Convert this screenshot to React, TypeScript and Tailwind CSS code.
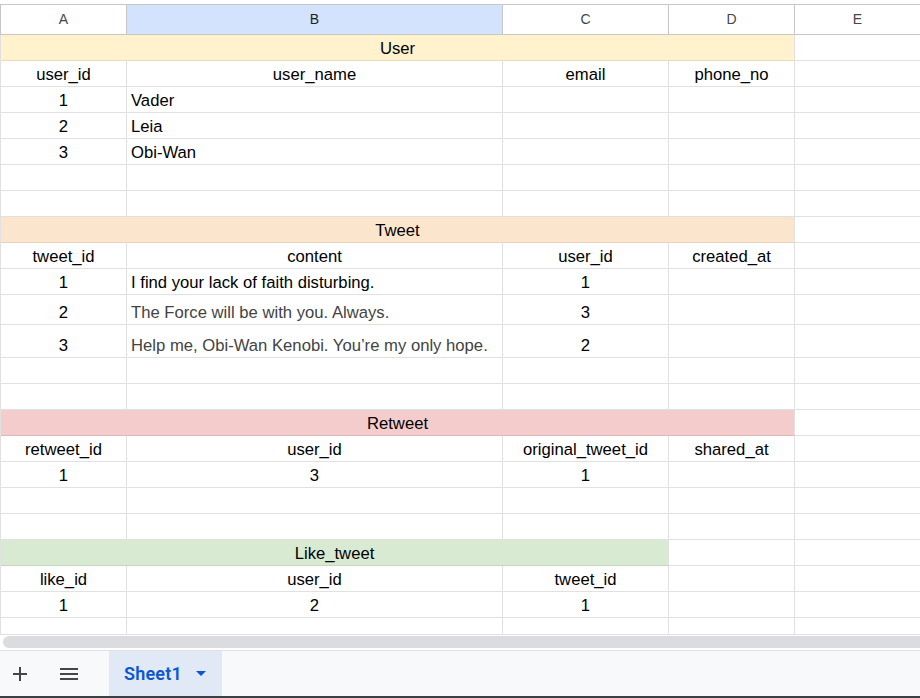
import type { ReactNode } from "react";

type Cell = { t?: string; left?: boolean; dim?: boolean };
type Band = { label: string; span: 3 | 4; bg: string; line: string };
type Row = { h?: string; band?: Band; cells?: Cell[] };

const COLS = ["w-[126px]", "w-[376px]", "w-[166px]", "w-[126px]"];
const FONT = "font-['Liberation_Sans',Arial,sans-serif]";

const c = (t: string): Cell => ({ t });
const l = (t: string, dim = false): Cell => ({ t, left: true, dim });

const ROWS: Row[] = [
  { band: { label: "User", span: 4, bg: "bg-[#fff2cc]", line: "border-b-[#eadcb5]" } },
  { cells: [c("user_id"), c("user_name"), c("email"), c("phone_no")] },
  { cells: [c("1"), l("Vader")] },
  { cells: [c("2"), l("Leia")] },
  { cells: [c("3"), l("Obi-Wan")] },
  {},
  {},
  { band: { label: "Tweet", span: 4, bg: "bg-[#fce5cd]", line: "border-b-[#e9d2ba]" } },
  { cells: [c("tweet_id"), c("content"), c("user_id"), c("created_at")] },
  { cells: [c("1"), l("I find your lack of faith disturbing."), c("1")] },
  { h: "h-[30px]", cells: [c("2"), l("The Force will be with you. Always.", true), c("3")] },
  { h: "h-[33px]", cells: [c("3"), l("Help me, Obi-Wan Kenobi. You’re my only hope.", true), c("2")] },
  {},
  {},
  { band: { label: "Retweet", span: 4, bg: "bg-[#f4cccc]", line: "border-b-[#e0b9b9]" } },
  { cells: [c("retweet_id"), c("user_id"), c("original_tweet_id"), c("shared_at")] },
  { cells: [c("1"), c("3"), c("1")] },
  {},
  {},
  { band: { label: "Like_tweet", span: 3, bg: "bg-[#d9ead3]", line: "border-b-[#c5d7bf]" } },
  { cells: [c("like_id"), c("user_id"), c("tweet_id")] },
  { cells: [c("1"), c("2"), c("1")] },
  {},
  {},
];

function GridCell({ w, cell, children }: { w: string; cell?: Cell; children?: ReactNode }) {
  const align = cell?.left ? "justify-start pl-[4px]" : "justify-center";
  const tone = cell?.dim ? "text-[#434343]" : "text-black";
  return (
    <div className={`${w} shrink-0 flex items-end pb-[2px] border-r border-b border-[#e1e1e1] whitespace-nowrap ${align} ${tone}`}>
      {children ?? cell?.t}
    </div>
  );
}

function SheetRow({ row }: { row: Row }) {
  const h = row.h ?? "h-[26px]";
  if (row.band) {
    const b = row.band;
    return (
      <div className={`flex ${h} border-l border-[#e1e1e1]`}>
        <div className={`${b.span === 4 ? "w-[794px]" : "w-[668px]"} shrink-0 flex items-end justify-center pb-[2px] border-r border-b border-[#e1e1e1] ${b.line} ${b.bg} text-black`}>
          {b.label}
        </div>
        {b.span === 3 && <GridCell w={COLS[3]} />}
        <div className="flex-1 border-b border-[#e1e1e1]" />
      </div>
    );
  }
  return (
    <div className={`flex ${h} border-l border-[#e1e1e1]`}>
      {COLS.map((w, i) => (
        <GridCell key={i} w={w} cell={row.cells?.[i]} />
      ))}
      <div className="flex-1 border-b border-[#e1e1e1]" />
    </div>
  );
}

function ColumnHeader() {
  const letters = ["A", "B", "C", "D"];
  return (
    <div className="flex h-[31px] border-t border-b border-l border-[#c7c7c7] text-[14px] text-[#444746]">
      {letters.map((x, i) => (
        <div key={x} className={`${COLS[i]} shrink-0 flex items-center justify-center border-r border-[#c7c7c7] ${x === "B" ? "bg-[#d3e3fd] text-[#1f1f1f]" : ""}`}>
          {x}
        </div>
      ))}
      <div className="flex-1 flex items-center justify-center">E</div>
    </div>
  );
}

export default function App() {
  return (
    <div className={`w-[920px] h-[698px] overflow-hidden bg-white flex flex-col ${FONT}`}>
      {/* grid */}
      <div className="h-[634px] shrink-0 overflow-hidden pt-[4px] text-[16.67px] leading-[19px]">
        <ColumnHeader />
        {ROWS.map((r, i) => (
          <SheetRow key={i} row={r} />
        ))}
      </div>

      {/* horizontal scrollbar */}
      <div className="h-[17px] shrink-0 border-t border-b border-[#e1e1e1] pt-[1px] pb-[2px] pl-[3px]">
        <div className="h-[12px] rounded-l-full bg-[#dadce0]" />
      </div>

      {/* sheet tabs */}
      <div className="h-[47px] shrink-0 flex items-stretch bg-[#f8f9fa] border-b-2 border-[#3c4043]">
        <div className="w-[39px] flex items-center justify-center">
          <svg width="14" height="14" viewBox="0 0 14 14" fill="#444746">
            <rect x="6" y="0" width="2" height="14" />
            <rect x="0" y="6" width="14" height="2" />
          </svg>
        </div>
        <div className="w-[60px] flex items-center justify-center">
          <svg width="18" height="12" viewBox="0 0 18 12" fill="#444746">
            <rect x="0" y="0" width="18" height="2" />
            <rect x="0" y="5" width="18" height="2" />
            <rect x="0" y="10" width="18" height="2" />
          </svg>
        </div>
        <div className="ml-[10px] w-[113px] bg-[#e1e9f7] flex items-center pl-[15px] gap-[14px]">
          <span className="font-['Roboto',sans-serif] font-semibold text-[18px] text-[#0b57d0] tracking-[0.2px]">Sheet1</span>
          <svg width="10" height="5" viewBox="0 0 10 5" fill="#0b57d0">
            <path d="M0 0h10L5 5z" />
          </svg>
        </div>
      </div>
    </div>
  );
}
